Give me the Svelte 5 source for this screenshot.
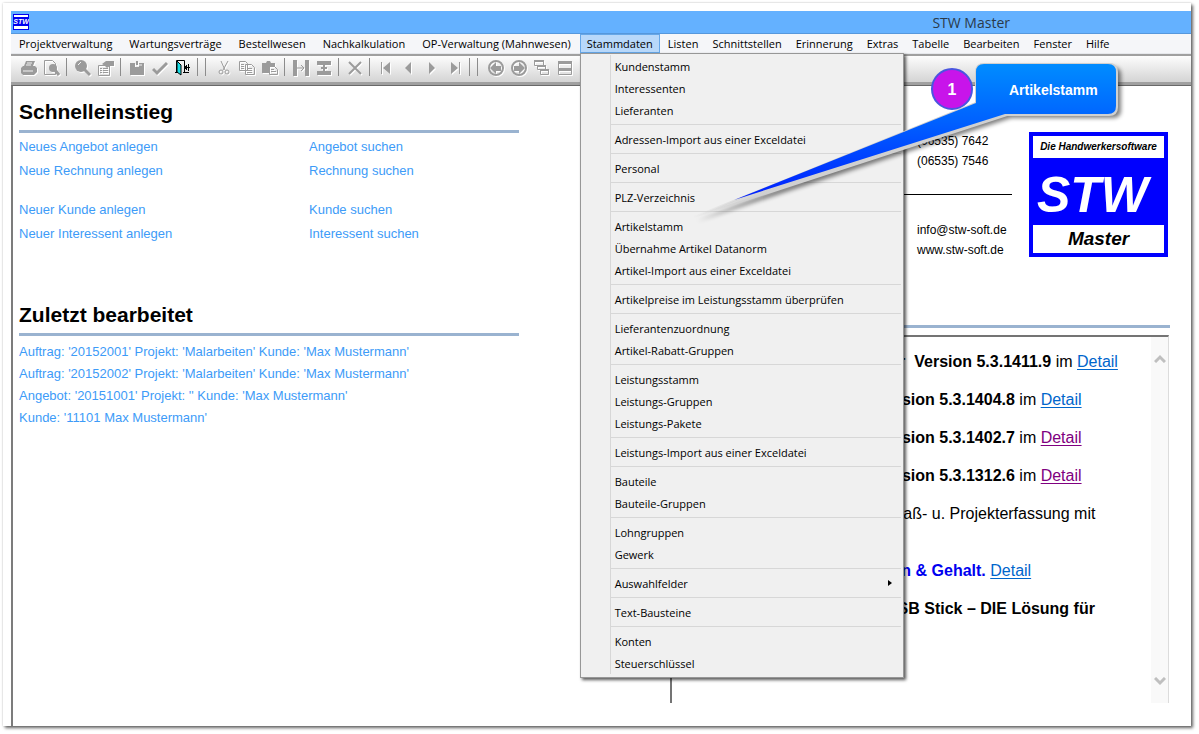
<script lang="ts">
  type NewsRow = {
    indent: number;
    bold?: string;
    plain?: string;
    link?: string;
    visited?: boolean;
    accent?: boolean;
    tall?: boolean;
  };

  const menusBefore = [
    "Projektverwaltung",
    "Wartungsverträge",
    "Bestellwesen",
    "Nachkalkulation",
    "OP-Verwaltung (Mahnwesen)",
  ];
  const menusAfter = [
    "Listen",
    "Schnittstellen",
    "Erinnerung",
    "Extras",
    "Tabelle",
    "Bearbeiten",
    "Fenster",
    "Hilfe",
  ];

  const menuGroups = [
    ["Kundenstamm", "Interessenten", "Lieferanten"],
    ["Adressen-Import aus einer Exceldatei"],
    ["Personal"],
    ["PLZ-Verzeichnis"],
    ["Artikelstamm", "Übernahme Artikel Datanorm", "Artikel-Import aus einer Exceldatei"],
    ["Artikelpreise im Leistungsstamm überprüfen"],
    ["Lieferantenzuordnung", "Artikel-Rabatt-Gruppen"],
    ["Leistungsstamm", "Leistungs-Gruppen", "Leistungs-Pakete"],
    ["Leistungs-Import aus einer Exceldatei"],
    ["Bauteile", "Bauteile-Gruppen"],
    ["Lohngruppen", "Gewerk"],
    ["Auswahlfelder"],
    ["Text-Bausteine"],
    ["Konten", "Steuerschlüssel"],
  ];
  const withSubmenu = "Auswahlfelder";

  const toolbar = [
    "print", "preview", "|",
    "find", "properties", "|",
    "save", "check", "exit", "||",
    "cut", "copy", "paste", "|",
    "column", "row", "|",
    "delete", "|",
    "first", "prev", "next", "last", "||",
    "back", "forward", "cascade", "tile", "tile-vertical",
  ];

  const quickLinks = [
    [
      ["Neues Angebot anlegen", "Angebot suchen"],
      ["Neue Rechnung anlegen", "Rechnung suchen"],
    ],
    [
      ["Neuer Kunde anlegen", "Kunde suchen"],
      ["Neuer Interessent anlegen", "Interessent suchen"],
    ],
  ];

  const recent = [
    "Auftrag: '20152001' Projekt: 'Malarbeiten' Kunde: 'Max Mustermann'",
    "Auftrag: '20152002' Projekt: 'Malarbeiten' Kunde: 'Max Mustermann'",
    "Angebot: '20151001' Projekt: '' Kunde: 'Max Mustermann'",
    "Kunde: '11101 Max Mustermann'",
  ];

  const news: NewsRow[] = [
    { indent: 212, bold: "für\u00a0 Version 5.3.1411.9", plain: "im", link: "Detail" },
    { indent: 205, bold: "Version 5.3.1404.8", plain: "im", link: "Detail" },
    { indent: 205, bold: "Version 5.3.1402.7", plain: "im", link: "Detail", visited: true },
    { indent: 205, bold: "Version 5.3.1312.6", plain: "im", link: "Detail", visited: true },
    { indent: 194, plain: "Aufmaß- u. Projekterfassung mit", tall: true },
    { indent: 200, bold: "Lohn & Gehalt.", link: "Detail", accent: true },
    { indent: 214, bold: "USB Stick – DIE Lösung für" },
  ];
</script>

{#snippet icon(name: string)}
  <svg class="icon" class:colored={name === "exit"} viewBox="0 0 16 16" aria-hidden="true">
    {#if name === "print"}
      <path d="M5 1h9l-2 5H3z" />
      <path d="M6 3h5M5 5h5" class="cutout" />
      <path d="M2 6h12l2 2v4l-3 3H2l-2-2V8z" />
      <path d="M2 11h10" class="cutout" />
    {:else if name === "preview"}
      <path d="M.5.5h8l3 3v11H.5z" class="line" />
      <circle cx="9" cy="8" r="4" />
      <path d="M11 10l4 5" class="line thick" />
    {:else if name === "find"}
      <circle cx="6" cy="6" r="6" />
      <path d="M3 5l3-3" class="cutout" />
      <path d="M9 9l6 6" class="line thick" />
    {:else if name === "properties"}
      <path d="M.5 5.500h11v10H.5z" class="line" />
      <path d="M2 8.500h2M5 8.500h5M2 10.500h2M5 10.500h5M2 12.500h2M5 12.500h5" class="line" />
      <path d="M4 4l4-3h8v5h-4l-3 2-2-2z" />
    {:else if name === "save"}
      <path d="M1 3h5v4h4V3h5v12H1z" />
      <path d="M7 1h2v4H7z" />
      <path d="M10 5h3" class="cutout" />
    {:else if name === "check"}
      <path d="M1 9l4 4 10-10" class="line thick" />
    {:else if name === "exit"}
      <path d="M1.500 13V.5h8V13M0 12.500h3M8 12.500h6" fill="none" stroke="#000" />
      <path d="M2 1l4 4v10l-4-3z" fill="#18e0e8" stroke="#000" />
      <path d="M15 7.500h-6M13.500 4v7M11.500 5v5M10.500 6v3" fill="none" stroke="#000" />
    {:else if name === "cut"}
      <path d="M5 1l4 9M12 1l-5 9" class="line" />
      <circle cx="5" cy="12" r="2" class="line" />
      <circle cx="11" cy="12" r="2" class="line" />
    {:else if name === "copy"}
      <path d="M.5 1.500h6l2 2v7h-8zM6.500 4.500h6l3 3v7h-9z" class="line" />
      <path d="M2 4.500h3M2 6.500h3M2 8.500h3M8 8.500h5M8 10.500h5M8 12.500h5" class="line" />
    {:else if name === "paste"}
      <path d="M0 3h4l1-2h3l1 2h4v4H8v6H0z" />
      <path d="M7.500 6.500h5l3 3v5h-8z" class="line" />
      <path d="M9 9.500h3M9 11.500h5" class="line" />
    {:else if name === "column"}
      <path d="M0 0h4v16H0zM12 0h4v16h-4z" />
      <path d="M4 8h7M8 5l3 3-3 3" class="line" />
    {:else if name === "row"}
      <path d="M1 1h14v4H1zM1 11h14v4H1z" />
      <path d="M8 5v6M5 8h6" class="line heavy" />
    {:else if name === "delete"}
      <path d="M2 2l12 12M14 2L2 14" class="line heavy" />
    {:else if name === "first"}
      <path d="M3 2h1v12H3zM12 2v12L5 8z" />
    {:else if name === "prev"}
      <path d="M10 2v12L4 8z" />
    {:else if name === "next"}
      <path d="M5 2v12l6-6z" />
    {:else if name === "last"}
      <path d="M12 2h1v12h-1zM4 2v12l7-6z" />
    {:else if name === "back"}
      <circle cx="8" cy="8" r="7" class="line heavy" />
      <path d="M2 8l6-6v4h5v5H8v3z" />
    {:else if name === "forward"}
      <circle cx="8" cy="8" r="7" class="line heavy" />
      <path d="M14 8L8 2v4H3v5h5v3z" />
    {:else if name === "cascade"}
      <path d="M.5.5h9v5h-9zM3.500 5.500h8v4h-8zM6.500 9.500h8v5h-8z" class="line" />
      <path d="M0 0h10v2H0zM3 5h9v2H3zM6 9h9v2H6z" />
    {:else if name === "tile"}
      <path d="M1.500 1.500h13v13h-13z" class="line" />
      <path d="M1 1h14v3H1zM1 8h14v3H1z" />
    {:else}
      <path d="M1.500 1.500h13v13h-13zM8 2v12" class="line" />
    {/if}
  </svg>
{/snippet}

<div class="frame">
  <header class="titlebar">
    <svg class="app-icon" viewBox="0 0 16 16" aria-hidden="true">
      <path d="M0 0h16v16H0z" fill="#0000f0" />
      <path d="M1 1h14v2H1zM1 12h14v3H1z" fill="#fff" />
      <text x="8" y="10" text-anchor="middle">STW</text>
    </svg>
    <h1>STW Master</h1>
  </header>

  <nav class="menubar">
    {#each menusBefore as label}
      <button type="button">{label}</button>
    {/each}
    <div class="menu-open">
      <button type="button" class="active" aria-expanded="true">Stammdaten</button>
      <div class="dropdown">
        <div class="dropdown-list">
          {#each menuGroups as group}
            <div class="menu-group">
              {#each group as label}
                <button type="button">
                  {label}
                  {#if label === withSubmenu}
                    <svg class="submenu-arrow" viewBox="0 0 4 6" aria-hidden="true"><path d="M0 0l4 3-4 3z" /></svg>
                  {/if}
                </button>
              {/each}
            </div>
          {/each}
        </div>
      </div>
    </div>
    {#each menusAfter as label}
      <button type="button">{label}</button>
    {/each}
  </nav>

  <div class="toolbar">
    {#each toolbar as name}
      {#if name === "|"}
        <span class="sep"></span>
      {:else if name === "||"}
        <span class="sep double"></span>
      {:else}
        <button type="button" aria-label={name}>{@render icon(name)}</button>
      {/if}
    {/each}
  </div>

  <main>
    <div class="column">
      <section class="quick">
        <h2>Schnelleinstieg</h2>
        {#each quickLinks as block}
          <div class="link-block">
            {#each block as row}
              {#each row as label}
                <a href="#top">{label}</a>
              {/each}
            {/each}
          </div>
        {/each}
      </section>

      <section class="recent">
        <h2>Zuletzt bearbeitet</h2>
        {#each recent as label}
          <a href="#top">{label}</a>
        {/each}
      </section>
    </div>

    <div class="column">
      <section class="company">
        <div class="contact">
          <div class="contact-block phones">
            <span>(06535) 7642</span>
            <span>(06535) 7546</span>
          </div>
          <div class="contact-block">
            <span>info@stw-soft.de</span>
            <span>www.stw-soft.de</span>
          </div>
        </div>
        <div class="logo">
          <span class="logo-top">Die Handwerkersoftware</span>
          <span class="logo-mark">STW</span>
          <span class="logo-bottom">Master</span>
        </div>
      </section>

      <section class="news">
        <div class="news-list">
          {#each news as row}
            <p class:tall={row.tall} style:padding-left="{row.indent}px">
              {#if row.bold}<b class:accent={row.accent}>{row.bold}</b>{/if}
              {row.plain ?? ""}
              {#if row.link}<a href="#top" class:visited={row.visited}>{row.link}</a>{/if}
            </p>
          {/each}
        </div>
        <div class="scrollbar">
          <button type="button" aria-label="Nach oben">
            <svg viewBox="0 0 12 9" aria-hidden="true"><path d="M1 8l5-5 5 5" /></svg>
          </button>
          <button type="button" aria-label="Nach unten">
            <svg viewBox="0 0 12 9" aria-hidden="true"><path d="M1 1l5 5 5-5" /></svg>
          </button>
        </div>
      </section>
    </div>
  </main>

  <div class="callout">
    <svg viewBox="0 0 450 175" aria-hidden="true">
      <defs>
        <linearGradient id="bubble" gradientUnits="userSpaceOnUse" x1="0" y1="9" x2="0" y2="150">
          <stop offset="0" stop-color="#008cff" />
          <stop offset="0.4" stop-color="#0062ff" />
          <stop offset="1" stop-color="#0018ff" />
        </linearGradient>
        <linearGradient id="rim" gradientUnits="userSpaceOnUse" x1="10" y1="0" x2="90" y2="0">
          <stop offset="0" stop-color="#d0d0d0" stop-opacity="0" />
          <stop offset="1" stop-color="#d0d0d0" />
        </linearGradient>
        <filter id="soft" x="-5%" y="-5%" width="110%" height="120%">
          <feGaussianBlur stdDeviation="2" />
        </filter>
      </defs>
      <path
        d="M14 163L296 51V17q0-8 8-8h126q8 0 8 8v35q0 8-8 8H328z"
        fill="#000"
        opacity="0.5"
        filter="url(#soft)"
        transform="translate(3 3)"
      />
      <path d="M14 162L296 48V17q0-8 8-8h125q8 0 8 8v35q0 8-8 8H327z" fill="url(#rim)" stroke="url(#rim)" stroke-width="2" />
      <circle cx="272" cy="34" r="20" fill="#c814ea" stroke="#4a55e0" stroke-width="2" />
      <path d="M54 145L296 48V17q0-8 8-8h124q8 0 8 8v34q0 8-8 8H325z" fill="url(#bubble)" />
    </svg>
    <span class="step">1</span>
    <strong>Artikelstamm</strong>
  </div>
</div>

<style>
  :global(body) {
    margin: 0;
    background: #fff;
  }

  .frame {
    position: relative;
    margin: 3px 8px 8px 3px;
    padding: 8px 0 0 8px;
    background: #fff;
    box-shadow: 2px 2px 3px rgb(0 0 0 / 60%), 0 0 2px rgb(0 0 0 / 20%);
    color: #000;
    font-family: "Liberation Sans", Arial, sans-serif;
    font-size: 13px;
  }

  button {
    margin: 0;
    border: 0;
    padding: 0;
    background: transparent;
    color: inherit;
    font: inherit;
    white-space: nowrap;
  }

  .titlebar {
    display: flex;
    height: 22px;
    align-items: center;
    justify-content: space-between;
    border-bottom: 1px solid #5597dc;
    padding: 0 181px 0 2px;
    background: #64b1ff;
  }

  .titlebar h1 {
    margin: 0;
    color: #2b3a4a;
    font-family: "Open Sans", "Noto Sans", sans-serif;
    font-size: 14px;
    font-weight: 400;
  }

  .app-icon {
    width: 16px;
    height: 16px;
  }

  .app-icon text {
    fill: #fff;
    font-size: 7px;
    font-style: italic;
    font-weight: 700;
  }

  .menubar {
    display: flex;
    height: 19px;
    border-bottom: 1px solid #e6e8ec;
    background: #f5f6f9;
    font-family: "Open Sans", "Noto Sans", sans-serif;
    font-size: 11px;
  }

  .menubar > button {
    height: 19px;
    padding: 0 9px 0 8px;
  }

  .menu-open > button,
  .menu-open ~ button {
    height: 19px;
    padding: 0 7px;
  }

  .menu-open {
    position: relative;
    margin-right: 1px;
  }

  .menu-open > .active {
    box-shadow: inset 0 0 0 1px #66a7e8;
    background: #b8d8fa;
  }

  .dropdown {
    position: absolute;
    z-index: 2;
    top: 19px;
    left: 0;
    box-sizing: border-box;
    width: 324px;
    border: 1px solid #979797;
    padding: 1px 2px 3px 29px;
    background: #f0f0f0;
    box-shadow: 2px 2px 3px rgb(0 0 0 / 65%);
  }

  .dropdown-list {
    border-left: 1px solid #d7d7d7;
  }

  .menu-group + .menu-group {
    margin-top: 3px;
    border-top: 1px solid #d7d7d7;
    padding-top: 3px;
  }

  .menu-group button {
    display: flex;
    width: 100%;
    height: 22px;
    align-items: center;
    justify-content: space-between;
    padding: 0 9px 0 4px;
    text-align: left;
  }

  .submenu-arrow {
    width: 4px;
    height: 6px;
  }

  .toolbar {
    display: flex;
    height: 26px;
    align-items: flex-start;
    border-top: 2px solid #a0a0a0;
    border-bottom: 3px solid #a0a0a0;
    padding-left: 6px;
    background: linear-gradient(#fdfdfd, #d4d4d4);
  }

  .toolbar button {
    display: grid;
    width: 23px;
    height: 24px;
    flex: none;
    place-items: center;
  }

  .sep {
    width: 1px;
    height: 18px;
    margin: 2px 4px 0 3px;
    background: #8c8c8c;
  }

  .sep.double {
    box-sizing: border-box;
    width: 9px;
    margin-right: 6px;
    border: solid #8c8c8c;
    border-width: 0 1px;
    background: none;
  }

  .icon {
    width: 16px;
    height: 16px;
    fill: #9b9b9b;
    filter: drop-shadow(1px 1px 0 #fff);
  }

  .icon.colored {
    filter: none;
  }

  .icon .line {
    fill: none;
    stroke: #9b9b9b;
  }

  .icon .heavy {
    stroke-width: 2;
  }

  .icon .thick {
    stroke-width: 3;
  }

  .icon .cutout {
    fill: none;
    stroke: #f2f2f2;
  }

  main {
    display: grid;
    grid-template-columns: 1fr 1fr;
    gap: 151px;
    border-top: 1px solid #696969;
    border-left: 2px solid #7c7c7c;
    padding: 0 21px 23px 6px;
  }

  .column {
    min-width: 0;
  }

  h2 {
    margin: 0 0 2px;
    border-bottom: 3px solid #9ab3d0;
    padding: 14px 0 6px;
    font-size: 21px;
    line-height: 24px;
  }

  .quick a,
  .recent a {
    color: #3d9bf8;
    text-decoration: none;
  }

  .link-block {
    display: grid;
    grid-template-columns: 29fr 21fr;
    margin-bottom: 15px;
    line-height: 24px;
  }

  .recent {
    padding-top: 28px;
  }

  .recent h2 {
    margin-bottom: 5px;
  }

  .recent a {
    display: block;
    line-height: 22px;
  }

  .company {
    display: flex;
    height: 193px;
    box-sizing: border-box;
    justify-content: flex-end;
    gap: 17px;
    padding: 45px 2px 0 0;
  }

  .contact {
    flex: 1;
    font-size: 12px;
    line-height: 20px;
  }

  .contact-block {
    display: flex;
    flex-direction: column;
    padding-left: 247px;
  }

  .phones {
    margin-bottom: 25px;
    border-bottom: 1px solid #000;
    padding-bottom: 23px;
  }

  .logo {
    display: flex;
    width: 131px;
    height: 117px;
    flex-direction: column;
    border: 4px solid #0000fe;
    margin-top: 1px;
    background: #0000fe;
    font-style: italic;
    font-weight: 700;
    text-align: center;
  }

  .logo-top {
    background: #fff;
    font-size: 10px;
    line-height: 22px;
  }

  .logo-mark {
    flex: 1;
    padding-right: 12px;
    color: #fff;
    font-size: 50px;
    line-height: 74px;
  }

  .logo-bottom {
    background: #fff;
    font-size: 19px;
    line-height: 28px;
  }

  .logo-mark {
    height: 67px;
  }

  .news {
    position: relative;
    display: flex;
    height: 366px;
    border: solid #747474;
    border-width: 2px 1px 0 2px;
    border-right-color: #dcdcdc;
    margin: 56px 1px 0 0;
  }

  .news::before {
    position: absolute;
    top: -12px;
    right: -2px;
    left: -2px;
    height: 3px;
    background: #9ab3d0;
    content: "";
  }

  .news-list {
    flex: 1;
    min-width: 0;
    padding-top: 15px;
    font-size: 16px;
    line-height: 19px;
  }

  .news-list p {
    margin: 0 0 19px;
    white-space: nowrap;
  }

  .news-list p.tall {
    margin-bottom: 38px;
  }

  .news-list a {
    color: #0066cc;
    text-underline-offset: 2px;
  }

  .news-list a.visited {
    color: #800080;
  }

  .accent {
    color: #0000f0;
  }

  .scrollbar {
    display: flex;
    width: 17px;
    flex-direction: column;
    justify-content: space-between;
    padding: 14px 0;
    background: #f9f9f9;
  }

  .scrollbar svg {
    width: 12px;
    height: 9px;
    fill: none;
    stroke: #bfbfbf;
    stroke-width: 3;
  }

  .callout {
    position: absolute;
    z-index: 3;
    top: 52px;
    left: 677px;
    width: 450px;
    height: 175px;
    color: #fff;
    font-weight: 700;
    pointer-events: none;
  }

  .callout svg {
    display: block;
    width: 100%;
    height: 100%;
  }

  .step,
  .callout strong {
    position: absolute;
    top: 25px;
    line-height: 20px;
  }

  .step {
    left: 252px;
    width: 40px;
    font-size: 16px;
    text-align: center;
  }

  .callout strong {
    left: 329px;
    font-size: 14px;
  }
</style>
